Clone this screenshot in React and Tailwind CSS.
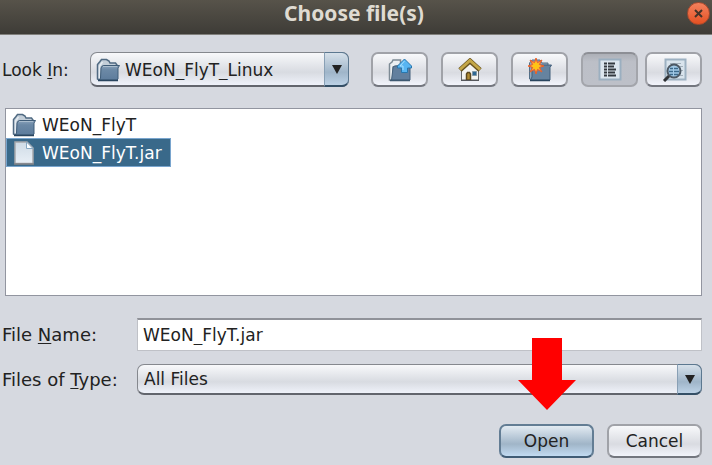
import React from "react";

const toolButton =
  "flex h-[35px] w-[57px] shrink-0 items-center justify-center rounded-[7px] border-2 border-[#a0a2a8] border-b-[#73767e] bg-linear-to-b from-[#f8f9fb] via-[#d9dbe1] via-60% to-[#f2f4fb]";
const pressedButton =
  "flex h-[35px] w-[57px] shrink-0 items-center justify-center rounded-[7px] border-2 border-[#a3a5ab] border-t-[#8d8f95] bg-linear-to-b from-[#adb0b7] via-[#bcbfc7] via-25% to-[#bdc0c8]";

function Folder() {
  return (
    <svg width="24" height="24" viewBox="0 0 24 24" aria-hidden="true">
      <defs>
        <linearGradient id="folder" x1="0" y1="0" x2="0" y2="1">
          <stop offset="0" stopColor="#8ba3bb" />
          <stop offset="0.3" stopColor="#6c89a6" />
          <stop offset="1" stopColor="#5d7c9c" />
        </linearGradient>
      </defs>
      <path d="M1.500 21V6.500L4 3.500 5.500 1.500h5L13 3l1 2h5.500L21 7v14.500H2.500Z" fill="#c3ced8" stroke="#506a82" strokeWidth="1.500" />
      <path d="M3.500 20.500V8L6.500 4" fill="none" stroke="#e4ebf1" strokeWidth="1.500" />
      <path d="M5 10Q5.500 7.500 8 7.500h15.500L22 10v11l-1 1H3.500L4.500 20Z" fill="url(#folder)" stroke="#3f5c78" />
      <path d="M7 8.500h14" stroke="#a9bccd" />
      <path d="M2 22.500h20" stroke="#29455f" strokeWidth="1.500" />
    </svg>
  );
}

function UpFolder() {
  return (
    <svg width="24" height="24" viewBox="0 0 24 24" aria-hidden="true">
      <path d="M1.500 22V6L4 4l1-2h7.500v5L5 9v13Z" fill="#eceff2" stroke="#7d8a95" strokeWidth="1.500" />
      <path d="M5 10Q5 8 7 8h15v14H3.500Z" fill="#627f9e" stroke="#45617d" />
      <path d="M2 22.500h20" stroke="#3d5870" strokeWidth="1.500" />
      <path d="M16.500 1 23.500 8v2H19.500v4.500h-6V10H9.500V8Z" fill="#58b5f2" stroke="#2877ae" />
      <path d="m16.500 3-4.500 5h3v4" fill="none" stroke="#a7e0ff" />
    </svg>
  );
}

function Home() {
  return (
    <svg width="24" height="24" viewBox="0 0 24 24" aria-hidden="true">
      <path d="M3.500 11 12 4l8.500 7v11h-17Z" fill="#f4f4f2" stroke="#65676c" />
      <path d="M8.500 22v-6l1-1.500h2l1 1.500v6Z" fill="#b18b32" stroke="#5d4920" strokeWidth="1.500" />
      <path d="M14.500 13.500h4v4h-4Z" fill="#2d6794" stroke="#8097a5" />
      <path d="m2 12 10-9 10 9" fill="none" stroke="#66521f" strokeWidth="5" />
      <path d="m2 11.500 10-9 10 9" fill="none" stroke="#c4a748" strokeWidth="3" />
      <path d="M3 22.500h18" stroke="#55575c" />
    </svg>
  );
}

function NewFolder() {
  return (
    <svg width="24" height="24" viewBox="0 0 24 24" aria-hidden="true">
      <path d="M1.500 21V5L4 2h8l2 3h6v4L4 22Z" fill="#91a7ba" stroke="#526e87" />
      <path d="M4 9 6 7h17.500L22 9.500V22H2.500L4 19Z" fill="#66839f" stroke="#405e7a" />
      <path d="M2 22.500h20" stroke="#29455f" strokeWidth="1.500" />
      <g transform="translate(8 8)">
        <path d="m0-8 1.500 4.500L6-6 3.500-1.500 8 0 3.500 1.500 6 6 1.500 3.500 0 8l-1.500-4.500L-6 6-3.500 1.500-8 0l4.500-1.500L-6-6l4.500 2.500Z" fill="#f4824a" stroke="#e8622b" />
        <path d="m0-5 1.500 2.500L4-4 2.500-1.500 5 0 2.500 1.500 4 4 1.500 2.500 0 5l-1.500-2.500L-4 4l1.500-2.500L-5 0l2.500-1.500L-4-4l2.500 1.500Z" fill="#ffc414" />
      </g>
    </svg>
  );
}

function ListView() {
  return (
    <svg width="24" height="24" viewBox="0 0 24 24" aria-hidden="true">
      <path d="M1.500 1.500h21v20h-21Z" fill="#dce6ee" stroke="#9bafc0" strokeWidth="2" />
      <path d="M6 5.500h3M6 8.500h3M6 11.500h3M6 14.500h3M6 17.500h3M10 5.500h7M10 8.500h6M10 11.500h8M10 14.500h7M10 17.500h8" stroke="#343a40" strokeWidth="2" />
    </svg>
  );
}

function DetailView() {
  return (
    <svg width="26" height="24" viewBox="0 0 26 24" aria-hidden="true">
      <path d="M4.500 1.500h20v20h-20Z" fill="#d9e4ed" stroke="#9db1c2" strokeWidth="2" />
      <path d="M9 5.500h11M19 8.500h3M20 12.500h2M19 17.500h3" stroke="#a2afba" />
      <path d="m9 17-6 6" stroke="#303235" strokeWidth="3" />
      <circle cx="13" cy="13" r="6.500" fill="#a3cbe8" stroke="#4c5864" strokeWidth="2" />
      <path d="M9 10.500h3M13 10.500h4M8 13.500h4M13 13.500h5M9 16.500h3M13 16.500h4" stroke="#3c6a8c" strokeWidth="1.500" />
    </svg>
  );
}

function FilePage() {
  return (
    <svg width="24" height="24" viewBox="0 0 24 24" aria-hidden="true">
      <defs>
        <linearGradient id="page" x1="0" y1="0" x2="0" y2="1">
          <stop offset="0" stopColor="#cfdbe6" />
          <stop offset="1" stopColor="#e8eff6" />
        </linearGradient>
      </defs>
      <path d="M3 1h12l6 6v15.500H3Z" fill="url(#page)" stroke="#a6a8ac" strokeWidth="1.500" />
      <path d="M14.500 1v6.500H21Z" fill="#fbfdff" stroke="#87a8c2" />
      <path d="M2 23h20" stroke="#7d7f84" strokeWidth="1.500" />
    </svg>
  );
}

function SelectArrow() {
  return (
    <span className="pointer-events-none absolute inset-y-0 right-0 flex w-[25px] items-center justify-center rounded-r-[7px] border border-[#5c7890] border-b-2 border-l-[#89a0b5] border-b-[#344f66] bg-linear-to-b from-[#d7e1ea] via-[#9fb5c9] via-60% to-[#bdd2e6]">
      <svg width="10" height="9" viewBox="0 0 10 9" aria-hidden="true">
        <path d="M0 0h10L5 9Z" fill="#222" />
      </svg>
    </span>
  );
}

const selectStyle =
  "block w-full appearance-none rounded-[7px] border border-[#85888e] border-b-2 border-b-[#62656d] bg-linear-to-b from-[#f8f9fb] via-[#d8dbe1] via-60% to-[#eff2fa] pr-7";

export default function App() {
  return (
    <main className="bg-[#d6d9e0] font-['DejaVu_Sans',sans-serif] text-[17px] leading-5 text-[#222]">
      <header className="relative flex h-[35px] items-center justify-center border-b border-[#81807c] bg-linear-to-b from-[#57534a] to-[#3e3c37] pb-2">
        <h1 className="pr-1 font-['Noto_Sans',sans-serif] text-[21px] leading-6 font-bold text-[#dfdbd2]">Choose file(s)</h1>
        <button aria-label="Close" className="absolute top-0.5 right-0.5 flex size-[23px] items-center justify-center rounded-full border border-[#a9492d] bg-linear-to-b from-[#f3815c] to-[#e35020]">
          <svg width="9" height="9" viewBox="0 0 9 9" aria-hidden="true">
            <path d="m1 1 7 7M8 1 1 8" stroke="#443329" strokeWidth="2" />
          </svg>
        </button>
      </header>

      <form className="pt-[17px] pr-[10px] pb-2" onSubmit={(e) => e.preventDefault()}>
        <div className="flex items-center">
          <label htmlFor="directory" className="w-[90px] shrink-0 pl-0.5">Look <u className="underline-offset-2">I</u>n:</label>
          <div className="relative mr-[22px] min-w-0 flex-1">
            <span className="pointer-events-none absolute inset-y-0 left-1.5 flex items-center"><Folder /></span>
            <select id="directory" className={`${selectStyle} h-[35px] pt-0.5 pl-[34px]`}>
              <option>WEoN_FlyT_Linux</option>
            </select>
            <SelectArrow />
          </div>
          <div className="flex gap-[7px]">
            <div className="flex gap-[13px]">
              <button type="button" aria-label="Up one level" className={toolButton}><UpFolder /></button>
              <button type="button" aria-label="Home" className={toolButton}><Home /></button>
              <button type="button" aria-label="Create new folder" className={toolButton}><NewFolder /></button>
              <button type="button" aria-label="List" aria-pressed="true" className={pressedButton}><ListView /></button>
            </div>
            <button type="button" aria-label="Details" className={toolButton}><DetailView /></button>
          </div>
        </div>

        <ul role="listbox" aria-label="Files" className="mt-[21px] ml-[5px] flex min-h-[188px] flex-col items-start border border-[#9295a0] bg-white">
          <li role="option" aria-selected="false" className="flex h-[29px] items-center gap-1.5 px-1.5 pt-0.5"><Folder />WEoN_FlyT</li>
          <li role="option" aria-selected="true" className="flex h-[29px] items-center gap-1.5 border border-[#79a5ce] bg-[#39698a] pr-2 pl-[5px] text-white"><FilePage />WEoN_FlyT.jar</li>
        </ul>

        <div className="mt-[22px] flex items-center">
          <label htmlFor="filename" className="w-[137px] shrink-0 pl-0.5 text-lg leading-5">File <u className="underline-offset-2">N</u>ame:</label>
          <input id="filename" defaultValue="WEoN_FlyT.jar" className="h-[33px] min-w-0 flex-1 border border-[#bfc1c7] border-t-2 border-t-[#909299] bg-white px-[5px]" />
        </div>

        <div className="mt-[13px] flex items-center">
          <label htmlFor="filetype" className="w-[137px] shrink-0 pl-0.5 text-lg leading-5">Files of <u className="underline-offset-2">T</u>ype:</label>
          <div className="relative min-w-0 flex-1">
            <select id="filetype" className={`${selectStyle} h-[31px] pl-1.5`}>
              <option>All Files</option>
            </select>
            <SelectArrow />
          </div>
        </div>

        <div className="mt-[29px] flex justify-end gap-[13px]">
          <div className="relative">
            <svg className="absolute bottom-full left-1/2 mb-[14px] -translate-x-1/2" width="58" height="72" viewBox="0 0 58 72" aria-hidden="true">
              <path d="M14 0h30v42h14L29 72 0 42h14Z" fill="#f00" />
            </svg>
            <button type="submit" className="h-[34px] w-[95px] rounded-[7px] border-2 border-[#637d94] border-b-[#405c75] bg-linear-to-b from-[#e3ebf2] via-[#a0b5c8] via-60% to-[#c2dbf2]">Open</button>
          </div>
          <button type="button" className="h-[34px] w-[95px] rounded-[7px] border-2 border-[#a0a2a8] border-b-[#73767e] bg-linear-to-b from-[#f8f9fb] via-[#d9dbe1] via-60% to-[#f2f4fb]">Cancel</button>
        </div>
      </form>
    </main>
  );
}
